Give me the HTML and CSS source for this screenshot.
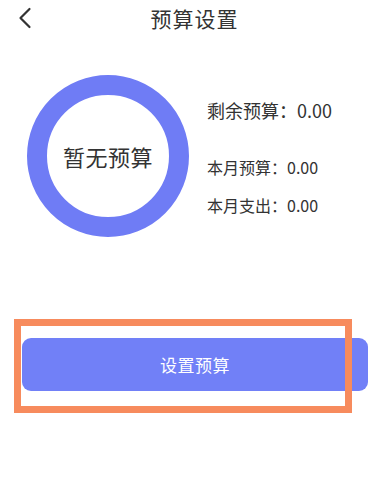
FILE: index.html
```html
<!DOCTYPE html>
<html lang="zh-CN">
<head>
  <meta charset="UTF-8">
  <title>预算设置</title>
  <meta name="viewport" content="width=device-width, initial-scale=1.0">
  <link rel="stylesheet" href="styles.css">
</head>
<body>
<header class="topbar">
  <span class="back">
    <svg width="14" height="22" viewBox="0 0 14 22" xmlns="http://www.w3.org/2000/svg">
      <polyline points="11.5,2 2.5,11 11.5,20" fill="none" stroke="#333" stroke-width="2.2" stroke-linecap="round" stroke-linejoin="round"/>
    </svg>
  </span>
  <h1 class="title">预算设置</h1>
</header>

<section class="summary">
  <div class="ring">
    <span>暂无预算</span>
  </div>
  <div class="stats">
    <div class="stat-main">剩余预算：0.00</div>
    <div class="stat">本月预算：0.00</div>
    <div class="stat">本月支出：0.00</div>
  </div>
</section>

<div class="action">
  <button class="btn-set">设置预算</button>
</div>

<div class="highlight"></div>
</body>
</html>
```

FILE: styles.css
```css
:root {
  --primary: #7180f7;
  --ring: #6f7cf5;
  --text-main: #333;
  --mark: #f78b5d;
}
html, body {
  margin: 0;
  padding: 0;
  background: #fff;
  color: var(--text-main);
}
body {
  font-family: 'Noto Sans CJK SC', 'Noto Sans', sans-serif;
  position: relative;
  min-height: 501px;
}
.topbar {
  height: 36px;
  display: flex;
  align-items: center;
  justify-content: center;
  position: relative;
}
.back {
  position: absolute;
  left: 18px;
  top: 7px;
  line-height: 0;
}
.title {
  margin: 0 0 0 2px;
  font-size: 21px;
  font-weight: 400;
  letter-spacing: 1px;
  line-height: 36px;
}
.summary {
  display: flex;
  align-items: flex-start;
  margin-top: 39px;
  padding-left: 27px;
}
.ring {
  width: 122px;
  height: 122px;
  border: 20.5px solid var(--ring);
  border-radius: 50%;
  display: flex;
  align-items: center;
  justify-content: center;
  flex-shrink: 0;
}
.ring span {
  font-size: 22px;
  letter-spacing: 0.5px;
}
.stats {
  margin-left: 18px;
  padding-top: 23px;
}
.stat-main {
  font-size: 18px;
  line-height: 24px;
  margin-bottom: 34px;
}
.stat {
  font-size: 16px;
  line-height: 22px;
  margin-bottom: 16px;
}
.action {
  padding: 0 19px 0 22px;
  margin-top: 101px;
}
.btn-set {
  width: 100%;
  height: 53px;
  border: none;
  border-radius: 9px;
  background: var(--primary);
  color: #fff;
  font-family: inherit;
  font-size: 17px;
  letter-spacing: 0.5px;
}
.highlight {
  position: absolute;
  left: 14px;
  top: 319px;
  width: 324px;
  height: 80px;
  border: 7px solid var(--mark);
  pointer-events: none;
}
```
